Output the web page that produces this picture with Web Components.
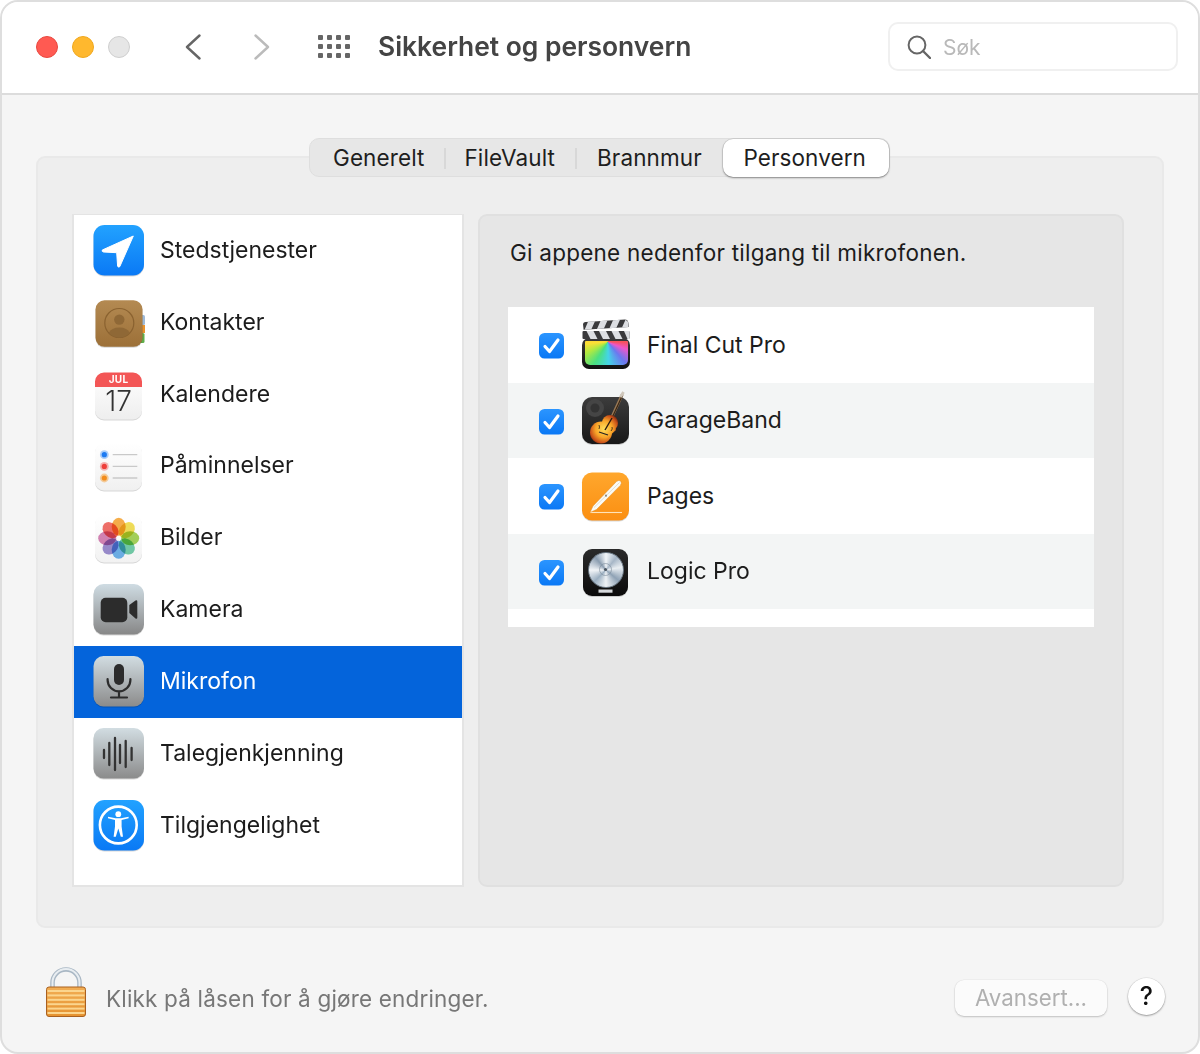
<!DOCTYPE html>
<html lang="nb">
<head>
<meta charset="utf-8">
<title>Sikkerhet og personvern</title>
<style>
html, body { margin: 0; padding: 0; background: #fff; }
body { font-family: Inter, "Liberation Sans", sans-serif; overflow: hidden; }
</style>
</head>
<body>
<pref-window>
  <title-bar slot="top" heading="Sikkerhet og personvern" placeholder="Søk"></title-bar>
  <tab-strip slot="tabs">
    <tab-item>Generelt</tab-item>
    <tab-item sep>FileVault</tab-item>
    <tab-item sep style="padding-left:22px">Brannmur</tab-item>
    <tab-item active>Personvern</tab-item>
  </tab-strip>
  <side-list slot="side">
    <side-row icon="location">Stedstjenester</side-row>
    <side-row icon="contacts">Kontakter</side-row>
    <side-row icon="calendar">Kalendere</side-row>
    <side-row icon="reminders">Påminnelser</side-row>
    <side-row icon="photos">Bilder</side-row>
    <side-row icon="camera">Kamera</side-row>
    <side-row icon="mic" selected>Mikrofon</side-row>
    <side-row icon="speech">Talegjenkjenning</side-row>
    <side-row icon="access">Tilgjengelighet</side-row>
  </side-list>
  <app-panel slot="main" heading="Gi appene nedenfor tilgang til mikrofonen.">
    <app-row icon="finalcut">Final Cut Pro</app-row>
    <app-row icon="garageband" alt>GarageBand</app-row>
    <app-row icon="pages">Pages</app-row>
    <app-row icon="logic" alt>Logic Pro</app-row>
  </app-panel>
  <foot-bar slot="foot" message="Klikk på låsen for å gjøre endringer." button="Avansert..."></foot-bar>
</pref-window>

<script>
(function () {
    function define(name, css, html) {
        class El extends HTMLElement {
            connectedCallback() {
                if (this.shadowRoot) return;
                var root = this.attachShadow({ mode: 'open' });
                var body = typeof html === 'function' ? html(this) : html;
                root.innerHTML = '<style>' + css + '</style>' + body;
            }
        }
        customElements.define(name, El);
    }

    // --- Icons, all in a 52x52 box ---
    function tile(id, a, b, x, y, w, h, r) {
        return '<defs><linearGradient id="' + id + '" x1="0" y1="0" x2="0" y2="1">' +
            '<stop offset="0" stop-color="' + a + '"/><stop offset="1" stop-color="' + b + '"/></linearGradient></defs>' +
            '<rect x="' + x + '" y="' + (y + 1) + '" width="' + w + '" height="' + h + '" rx="' + r + '" fill="#000" opacity=".16"/>' +
            '<rect x="' + x + '" y="' + y + '" width="' + w + '" height="' + h + '" rx="' + r + '" fill="url(#' + id + ')"/>';
    }
    var petals = ['#f5a02a', '#efd93a', '#97cb3e', '#5cc79c', '#57a7ea', '#8c7bc9', '#cf6fa9', '#ee554e'];
    var ICONS = {
        location: tile('g', '#22a2ff', '#0a79f5', 0.5, 0, 50.5, 50.5, 11) +
            '<path d="M40.3 11 L9.3 25 Q8.6 26.6 10.5 27 L23.7 27.7 L24.6 41 Q25.4 43 26.8 41.6 Z" fill="#fff" stroke="#fff" stroke-width="1" stroke-linejoin="round"/>',
        contacts: '<rect x="44" y="18" width="8" height="10" rx="1.5" fill="#9db9d8"/><rect x="44" y="28" width="8" height="8" fill="#e8922e"/><rect x="44" y="36" width="7.5" height="10" rx="1.5" fill="#5fae4a"/>' +
            tile('g', '#b48a52', '#9c7038', 2.5, 3.3, 47, 46.5, 9) +
            '<circle cx="26.3" cy="26" r="14.5" fill="none" stroke="#8a6230" stroke-width="1.2"/><circle cx="26.3" cy="22.6" r="5.2" fill="#8f6836"/>' +
            '<path d="M15.8 36 Q18.3 30.5 26.3 30.5 Q34.3 30.5 36.8 36 Q31.8 40.5 26.3 40.5 Q20.8 40.5 15.8 36Z" fill="#8f6836"/>',
        calendar: tile('g', '#ffffff', '#eeeeee', 2, 3.5, 47, 47, 9) +
            '<path d="M2 18 V12.5 a9 9 0 0 1 9-9 H40 a9 9 0 0 1 9 9 V18Z" fill="#f35656"/>' +
            '<text x="25.5" y="14" text-anchor="middle" font-family="Inter, sans-serif" font-weight="700" font-size="10" letter-spacing=".3" fill="#fff">JUL</text>' +
            '<text x="25.7" y="41.7" text-anchor="middle" font-family="Inter, sans-serif" font-weight="300" font-size="28" fill="#333">17</text>',
        reminders: tile('g', '#ffffff', '#f0f0f0', 2, 3, 47, 47.5, 9) +
            '<circle cx="11.3" cy="14.7" r="4.4" fill="#2d86f5" opacity=".4"/><circle cx="11.3" cy="14.7" r="2.6" fill="#1d7bf2"/>' +
            '<circle cx="11.3" cy="26.4" r="4.4" fill="#f04a45" opacity=".4"/><circle cx="11.3" cy="26.4" r="2.6" fill="#ee3f3a"/>' +
            '<circle cx="11.3" cy="38" r="4.4" fill="#f59a2a" opacity=".45"/><circle cx="11.3" cy="38" r="2.6" fill="#f28c1c"/>' +
            '<path d="M19.7 14.7H44.3M19.7 26.4H44.3M19.7 38H44.3" stroke="#c9c9c9" stroke-width="1.3"/>',
        photos: tile('g', '#ffffff', '#f2f2f2', 2, 3, 47, 47.5, 9) +
            '<g transform="translate(25.7 26.3)">' + petals.map(function (c, i) {
                return '<ellipse cx="0" cy="-11.5" rx="7" ry="9" fill="' + c + '" opacity=".85" style="mix-blend-mode:multiply" transform="rotate(' + (i * 45) + ')"/>';
            }).join('') + '</g>',
        camera: tile('g', '#cfdce3', '#878787', 0.5, 0, 50.5, 50.5, 10) +
            '<rect x="7.7" y="13.7" width="26.6" height="24.6" rx="5" fill="#2c2c2c"/><path d="M36.3 21 L42.5 16.5 Q44.3 15.6 44.3 17.5 V33.5 Q44.3 35.4 42.5 34.5 L36.3 29Z" fill="#2c2c2c"/>',
        mic: tile('g', '#d2dde2', '#8b8b8b', 0.5, 0, 50.5, 50.5, 10) +
            '<rect x="21" y="8" width="10" height="21" rx="5" fill="#2c2c2c"/>' +
            '<path d="M14.6 23 V24 A11.4 11.4 0 0 0 37.4 24 V23 M26 35.5 V41 M18 41.5 H34" fill="none" stroke="#2c2c2c" stroke-width="2.2" stroke-linecap="round"/>',
        speech: tile('g', '#d2dde2', '#8b8b8b', 0.5, 0, 50.5, 50.5, 10) +
            '<path d="M11 22V30M16.3 15V37M22 10V42M27 17V35M32.7 13V39M38.6 20V32" stroke="#333" stroke-width="2.3" stroke-linecap="round"/>',
        access: tile('g', '#22a2ff', '#0a79f5', 0.5, 0, 50.5, 50.5, 11) +
            '<circle cx="25.3" cy="25" r="18.4" fill="none" stroke="#fff" stroke-width="2.6"/><circle cx="25.3" cy="14.2" r="2.9" fill="#fff"/>' +
            '<path d="M15 18.2 L22 20 V26.5 L20.6 36.7 H22.8 L25.3 28.5 L27.8 36.7 H30 L28.6 26.5 V20 L35.6 18.2 V16.8 L28 18.2 H22.6 L15 16.8Z" fill="#fff"/>',
        finalcut: '<defs><linearGradient id="f" x1="0" y1="0" x2="0" y2="1"><stop offset="0" stop-color="#3a3a3c"/><stop offset="1" stop-color="#111"/></linearGradient></defs>' +
            '<rect x="1" y="19" width="48" height="31" rx="7" fill="url(#f)"/>' +
            '<foreignObject x="3.5" y="21.5" width="43" height="24"><div xmlns="http://www.w3.org/1999/xhtml" style="width:43px;height:24px;border-radius:1px 1px 5px 5px;background:conic-gradient(from 90deg at 53% 4%,#ff4f5a 0deg,#f255cf 22deg,#6a78f5 50deg,#3ed6ea 88deg,#44e27e 122deg,#aeea3a 152deg,#ffe02e 176deg,#ff9030 270deg,#ff4f5a 360deg);filter:saturate(.95)"></div></foreignObject>' +
            '<path d="M2 5 Q2.5 3.2 4.5 3 L44 0.6 Q46.5 0.6 47.2 3 L48 8 L2.6 10.8Z" fill="#3a3a3c"/>' +
            '<path d="M7 2.7L14 2.3L10.4 10.3L3.6 10.7ZM19.5 2L26.5 1.5L22.9 9.5L16 10ZM32 1.2L39 .8L35.4 8.8L28.5 9.2ZM44.5 .7L47 2.8L47.6 8L41 8.4Z" fill="#dcdee2"/>' +
            '<rect x="1.5" y="12" width="47" height="8" rx="1" fill="#3a3a3c"/>' +
            '<path d="M5.5 12h7l4 8h-7zM18 12h7l4 8h-7zM30.5 12h7l4 8h-7zM43 12h5.5v8h-2z" fill="#dcdee2"/>',
        garageband: tile('g', '#3c3c3c', '#181818', 1, 3, 47, 47, 10) +
            '<circle cx="14" cy="14" r="9" fill="#454545"/><circle cx="14" cy="14" r="4.5" fill="#333"/>' +
            '<defs><radialGradient id="b" gradientUnits="userSpaceOnUse" cx="23" cy="35" r="17"><stop offset="0" stop-color="#ffe05a"/><stop offset=".5" stop-color="#f8a428"/><stop offset=".82" stop-color="#c8501a"/><stop offset="1" stop-color="#6e240e"/></radialGradient></defs>' +
            '<path d="M30 25 L41 1" stroke="#9a7a56" stroke-width="3" stroke-linecap="round"/><path d="M31 24 L41.6 1" stroke="#3a2614" stroke-width="1.2"/><path d="M39.5 3L42.5 -2" stroke="#d0c8bc" stroke-width="2.8"/>' +
            '<circle cx="20" cy="38.5" r="11" fill="url(#b)"/><circle cx="29" cy="29" r="8" fill="url(#b)"/><path d="M14 32 L29 23 L35 36 L24 46Z" fill="url(#b)"/>' +
            '<path d="M31 24 L24 36" stroke="#2a1a10" stroke-width="1.4"/><path d="M18 38l9 3" stroke="#222" stroke-width="1.2"/><path d="M18 31q1 2 0 4M31 33q1 2 -1 4" fill="none" stroke="#2a1a10" stroke-width=".8"/>',
        pages: tile('g', '#ffa72d', '#fb8f12', 1, 2.5, 47, 48, 10) +
            '<path d="M9 42.5H41" stroke="#ffe3b8" stroke-width="1.1"/>' +
            '<path d="M9 42.5 L12 36 L35.5 11.5 Q38 9.5 39.8 11.2 Q41.2 13 39.3 15.4 L15.5 39.5Z" fill="#fbfbf6" stroke="#e08a20" stroke-width=".5"/>' +
            '<path d="M13 37.5 L38.5 12.5" stroke="#d9d5c8" stroke-width=".8"/><circle cx="25" cy="25.7" r="1.1" fill="#8d8a80"/>',
        logic: tile('g', '#2a2a2a', '#0b0b0b', 2, 4, 45, 47, 9) +
            '<foreignObject x="5" y="6.5" width="39" height="36"><div xmlns="http://www.w3.org/1999/xhtml" style="width:36px;height:36px;margin:0 auto;border-radius:50%;box-sizing:border-box;border:1px solid #6d7a86;background:conic-gradient(#f2f5f8 0deg,#a6b6c6 40deg,#e9eef2 80deg,#8fa2b5 130deg,#eef2f5 180deg,#9cb0c2 225deg,#f1f4f7 270deg,#8b9db0 320deg,#f2f5f8 360deg)"></div></foreignObject>' +
            '<circle cx="24.5" cy="24.5" r="6" fill="none" stroke="#7b8a99" stroke-width=".6"/><circle cx="24.5" cy="24.5" r="1.6" fill="#4a5560"/>' +
            '<rect x="17.5" y="44.5" width="14" height="3.2" fill="#d5d8db"/>'
    };

    define('app-icon', ':host{display:block;width:52px;height:52px;flex:none}svg{display:block;overflow:visible}',
        function (el) { return '<svg width="52" height="52" viewBox="0 0 52 52">' + ICONS[el.getAttribute('name')] + '</svg>'; });

    define('pref-window',
        ':host{display:flex;flex-direction:column;box-sizing:border-box;width:1200px;height:1054px;border:2px solid #dedede;border-radius:18px;background:#f5f5f5;overflow:hidden;color:#1c1c1c}' +
        '.body{padding:43px 34px 0;display:flex;flex-direction:column;align-items:center}' +
        '::slotted(tab-strip){position:relative;z-index:1;margin-bottom:-21px}' +
        '.group{box-sizing:border-box;width:1128px;height:772px;padding:56px 38px 39px 34px;background:#eeeeee;border:2px solid #e9e9e9;border-radius:9px;display:grid;grid-template-columns:392px 646px;gap:14px}',
        '<slot name="top"></slot><div class="body"><slot name="tabs"></slot><div class="group"><slot name="side"></slot><slot name="main"></slot></div></div><slot name="foot"></slot>');

    define('title-bar',
        ':host{display:flex;align-items:center;box-sizing:border-box;height:93px;padding:0 20px 2px 34px;background:#fff;border-bottom:2px solid #dcdcdc;flex:none}' +
        '.dots{display:flex;gap:14px}.dots i{display:block;box-sizing:border-box;width:22px;height:22px;border-radius:50%;border:1px solid}' +
        '.nav{display:flex;margin-left:55px;gap:53px}svg{display:block}' +
        '.grid{margin-left:48px}h1{margin:-2px 0 0 28px;font:600 26.4px Inter,"Liberation Sans",sans-serif;letter-spacing:0;color:#444;flex:1}' +
        '.search{box-sizing:border-box;width:290px;height:49px;display:flex;align-items:center;gap:12px;padding:0 0 0 17px;border:2px solid #f0f0f0;border-radius:10px;color:#b9b9b9;font-size:21px}' +
        '.search span{position:relative;top:1px}',
        function (el) {
            var cells = '';
            for (var r = 0; r < 3; r++) for (var c = 0; c < 4; c++) {
                cells += '<rect x="' + (c * 9) + '" y="' + (r * 9) + '" width="5" height="5" rx="1" fill="#666"/>';
            }
            return '<div class="dots"><i style="background:#ff5a52;border-color:#e9483f"></i><i style="background:#ffb82e;border-color:#f0a81e"></i><i style="background:#e6e6e6;border-color:#cfcfcf"></i></div>' +
                '<div class="nav"><svg width="16" height="26" viewBox="0 0 16 26"><path d="M14.5 1.5 L2 13 L14.5 24.5" fill="none" stroke="#666" stroke-width="2.4" stroke-linecap="round" stroke-linejoin="round"/></svg>' +
                '<svg width="16" height="26" viewBox="0 0 16 26"><path d="M1.5 1.5 L14 13 L1.5 24.5" fill="none" stroke="#bbb" stroke-width="2.4" stroke-linecap="round" stroke-linejoin="round"/></svg></div>' +
                '<svg class="grid" width="32" height="23" viewBox="0 0 32 23">' + cells + '</svg>' +
                '<h1>' + el.getAttribute('heading') + '</h1>' +
                '<div class="search"><svg width="24" height="24" viewBox="0 0 24 24"><circle cx="10" cy="10" r="8.4" fill="none" stroke="#666" stroke-width="2"/><path d="M16 16 L23 23" stroke="#666" stroke-width="2.4" stroke-linecap="round"/></svg><span>' + el.getAttribute('placeholder') + '</span></div>';
        });

    define('tab-strip',
        ':host{display:flex;align-items:center;box-sizing:border-box;height:39px;width:581px;padding-left:3px;background:#e7e7e7;border:1px solid #dedede;border-radius:10px;margin-left:-1px}',
        '<slot></slot>');

    define('tab-item',
        ':host{display:flex;align-items:center;justify-content:center;position:relative;height:37px;box-sizing:border-box;padding:0 20px;font-size:22.5px;letter-spacing:.1px;color:#1e1e1e}' +
        ':host([sep])::before{content:"";position:absolute;left:0;top:9px;height:21px;width:2px;background:#d8d8d8}' +
        ':host([active]){margin-left:auto;padding:0 23px 0 20px;height:38px;background:#fff;border-radius:10px;box-shadow:0 1px 2px rgba(0,0,0,.4),0 0 0 .5px rgba(0,0,0,.12)}',
        '<slot></slot>');

    define('side-list',
        ':host{display:block;box-sizing:border-box;height:673px;background:#fff;border:2px solid #e4e4e4;border-top-width:1px;padding:0}',
        '<slot></slot>');

    define('side-row',
        ':host{display:flex;align-items:center;box-sizing:border-box;height:71.85px;padding-left:19px;font-size:23px}' +
        ':host([selected]){background:#0464db;color:#fff}' +
        'span{margin-left:15px;position:relative;top:-1px}',
        function (el) { return '<app-icon name="' + el.getAttribute('icon') + '"></app-icon><span><slot></slot></span>'; });

    define('app-panel',
        ':host{display:block;box-sizing:border-box;height:673px;background:#e6e6e6;border:2px solid #e0e0e0;border-radius:9px;padding:0 28px}' +
        'h2{margin:0;height:91px;padding:21px 0 0 2px;box-sizing:border-box;font:400 22.5px/32px Inter,"Liberation Sans",sans-serif;letter-spacing:.24px;color:#1c1c1c}' +
        '.list{background:#fff;padding-bottom:18px}',
        function (el) { return '<h2>' + el.getAttribute('heading') + '</h2><div class="list"><slot></slot></div>'; });

    define('app-row',
        ':host{display:flex;align-items:center;box-sizing:border-box;height:75.5px;padding-left:31px;font-size:23px;background:#fff}' +
        ':host([alt]){background:#f3f5f5}' +
        '.box{width:25px;height:25px;flex:none;position:relative;top:1px}svg{display:block}' +
        'app-icon{margin-left:17px}span{margin-left:14px}',
        function (el) {
            return '<div class="box"><svg width="25" height="26" viewBox="0 0 25 26"><defs><linearGradient id="k" x1="0" y1="0" x2="0" y2="1"><stop offset="0" stop-color="#2b95ff"/><stop offset="1" stop-color="#0a78f5"/></linearGradient></defs>' +
                '<rect width="25" height="25.5" rx="5.5" fill="url(#k)"/><path d="M6 13.5 L10.5 18.5 L19 7" fill="none" stroke="#fff" stroke-width="3.2" stroke-linecap="round" stroke-linejoin="round"/></svg></div>' +
                '<app-icon name="' + el.getAttribute('icon') + '"></app-icon><span><slot></slot></span>';
        });

    define('foot-bar',
        ':host{display:flex;align-items:flex-start;flex:1;padding:0 33px 0 44px;color:#777;font-size:22.5px;letter-spacing:.18px}' +
        'svg{display:block;flex:none}.lock{margin-top:39px}' +
        'p{margin:55px 0 0 20px;line-height:32px;flex:1}' +
        'button{box-sizing:border-box;width:152px;height:36px;margin-top:52px;border:0;border-radius:9px;background:#fbfbfb;box-shadow:0 1px 2px rgba(0,0,0,.2),0 0 0 .5px rgba(0,0,0,.06);color:#b0b0b0;font:22.3px Inter,"Liberation Sans",sans-serif;padding:0 0 2px}' +
        '.help{box-sizing:border-box;width:37px;height:37px;margin:50px 0 0 21px;border-radius:50%;background:#fff;box-shadow:0 1px 2px rgba(0,0,0,.35),0 0 0 .5px rgba(0,0,0,.1);color:#111;font:500 25px/37px Inter,"Liberation Sans",sans-serif;text-align:center}',
        function (el) {
            var stripes = '';
            for (var i = 0; i < 6; i++) stripes += '<rect x="1.5" y="' + (23 + i * 4.4) + '" width="37" height="2" fill="#fbd58e"/>';
            return '<svg class="lock" width="40" height="50" viewBox="0 0 40 50"><defs><linearGradient id="l" x1="0" y1="0" x2="0" y2="1"><stop offset="0" stop-color="#f2ae55"/><stop offset="1" stop-color="#e5922f"/></linearGradient></defs>' +
                '<path d="M6.5 21 V16 A13.5 13.5 0 0 1 33.5 16 V21" fill="none" stroke="#a9b7c4" stroke-width="4.6"/><path d="M6.5 21 V16 A13.5 13.5 0 0 1 33.5 16 V21" fill="none" stroke="#e8edf1" stroke-width="2" transform="translate(0 -.5)"/>' +
                '<rect x=".5" y="20" width="39" height="29.5" rx="2.5" fill="url(#l)" stroke="#a9601f"/>' + stripes + '</svg>' +
                '<p>' + el.getAttribute('message') + '</p><button>' + el.getAttribute('button') + '</button><div class="help">?</div>';
        });
})();
</script>
</body>
</html>
